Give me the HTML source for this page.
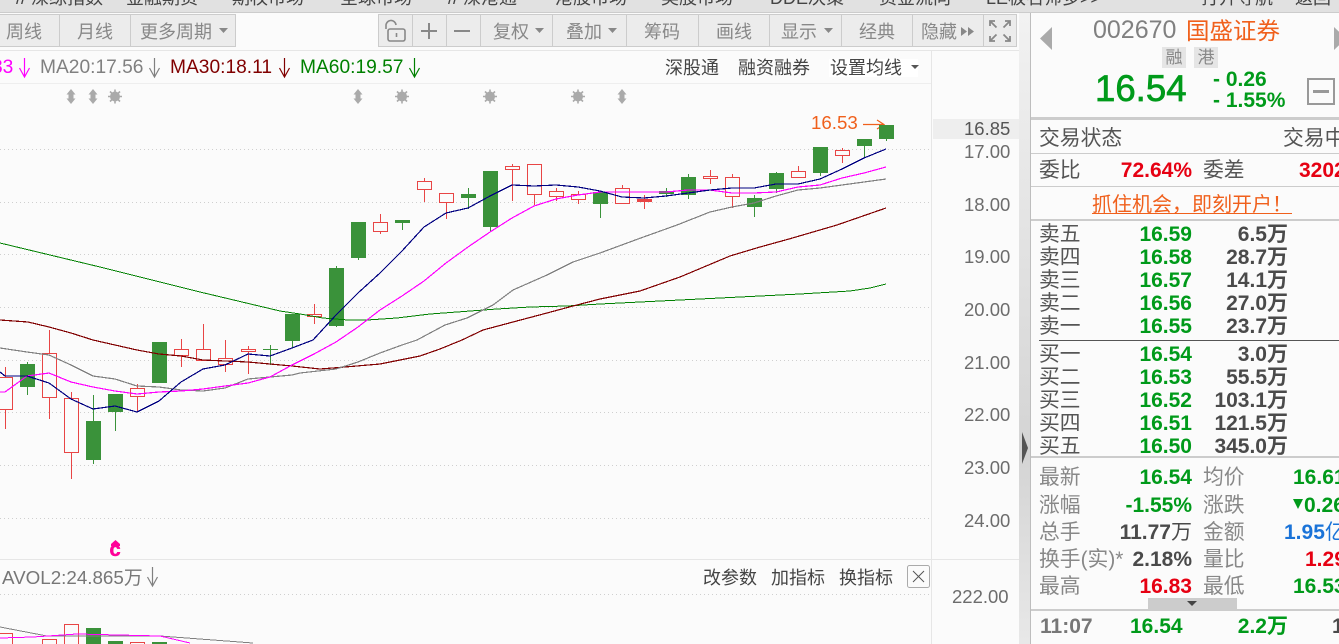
<!DOCTYPE html>
<html><head><meta charset="utf-8"><style>
html,body{margin:0;padding:0;width:1339px;height:644px;overflow:hidden;background:#fbfbfb}
body{position:relative;font-family:"Liberation Sans","Noto Sans CJK SC",sans-serif}
.t{position:absolute;white-space:nowrap;line-height:24px;height:24px}
.r{text-align:right}
.b{position:absolute;box-sizing:border-box;background:#ececec;border:1px solid #ccc;top:14px;height:33px}
.tb{font-size:18px;color:#888;top:20px}
.top{font-size:18px;color:#444;top:-14px}
.ax{font-size:18.5px;color:#6c6c6c;left:964px}
.ma{font-size:19.2px;top:56px}
.lnk{font-size:18px;color:#444}
.lb{font-size:20.8px;color:#555;left:1039px;transform:translateY(1px)}
.lg{font-size:20.8px;color:#888;transform:translateY(1px)}
.v{font-size:21px;font-weight:bold;transform:translateY(1px)}
.g{color:#009a1a}.rd{color:#e60012}.dk{color:#4a4a4a}.bl{color:#1a73d8}
.h{position:absolute;left:1031px;width:308px;background:#ccc}
</style></head><body>
<div style="position:absolute;left:0;top:0;width:1339px;height:12px;background:#e1e1e1;border-bottom:1px solid #ccc;overflow:hidden">
<span class="t top" style="left:16px">// 深综指数</span><span class="t top" style="left:126px">金融期货</span><span class="t top" style="left:232px">期权市场</span><span class="t top" style="left:340px">全球市场</span><span class="t top" style="left:448px">// 深港通</span><span class="t top" style="left:555px">港股市场</span><span class="t top" style="left:661px">美股市场</span><span class="t top" style="left:770px">DDE决策</span><span class="t top" style="left:879px">资金流向</span><span class="t top" style="left:986px">LE板名师多&gt;&gt;</span><span class="t top" style="left:1201px">打开导航</span><span class="t top" style="left:1295px">返回</span>
</div>
<div style="position:absolute;left:0;top:50px;width:1019px;height:1px;background:#e6e6e6"></div>
<div style="position:absolute;left:0;top:83px;width:932px;height:1px;background:#eee"></div>
<div style="position:absolute;left:931px;top:50px;width:1px;height:594px;background:#e6e6e6"></div>
<div style="position:absolute;left:0;top:559px;width:1019px;height:1px;background:#e6e6e6"></div>
<div style="position:absolute;left:933px;top:119px;width:86px;height:20px;background:#eee"></div>

<div class="b" style="left:-2px;width:62px"></div><div class="b" style="left:59px;width:72px"></div><div class="b" style="left:130px;width:106px"></div>
<div class="b" style="left:378px;width:35px"></div><div class="b" style="left:412px;width:35px"></div><div class="b" style="left:446px;width:35px"></div><div class="b" style="left:480px;width:73px"></div><div class="b" style="left:552px;width:75px"></div><div class="b" style="left:626px;width:73px"></div><div class="b" style="left:698px;width:72px"></div><div class="b" style="left:769px;width:73px"></div><div class="b" style="left:841px;width:72px"></div><div class="b" style="left:912px;width:72px"></div><div class="b" style="left:983px;width:34px"></div>
<span class="t tb" style="left:6px">周线</span><span class="t tb" style="left:77px">月线</span><span class="t tb" style="left:140px">更多周期</span><span class="t tb" style="left:493px">复权</span><span class="t tb" style="left:566px">叠加</span><span class="t tb" style="left:644px">筹码</span><span class="t tb" style="left:716px">画线</span><span class="t tb" style="left:781px">显示</span><span class="t tb" style="left:859px">经典</span><span class="t tb" style="left:921px">隐藏</span>

<svg width="1339" height="644" style="position:absolute;left:0;top:0" xmlns="http://www.w3.org/2000/svg">
<g fill="#888"><path d="M219 28h9l-4.500 5z M535 28h9l-4.500 5z M608 28h9l-4.500 5z M824 28h9l-4.500 5z M961 27l6 4.500-6 4.500z M968 27l6 4.500-6 4.500z"/></g>
<g fill="none" stroke="#888" stroke-width="1.600"><rect x="388" y="29" width="17" height="12" rx="2"/><path d="M386 29V26a5 5 0 0 1 10-1M396.500 33v4"/></g>
<path d="M421 31h16M429 23v16M454 31h16" stroke="#888" stroke-width="2" fill="none"/>
<g fill="none" stroke="#888" stroke-width="1.800"><path d="M990 26v-5h5M990.500 21.500l6 6M1010 26v-5h-5M1009.500 21.500l-6 6M990 36v5h5M990.500 40.500l6-6M1010 36v5h-5M1009.500 40.500l-6-6"/></g>
<rect x="829" y="59" width="89" height="18" fill="#fff"/>
<path d="M911 65h8l-4 4z" fill="#555"/>

<g stroke="#cfcfcf" stroke-width="1" stroke-dasharray="1 3" shape-rendering="crispEdges">
<path d="M0 149.500H932M0 202.500H932M0 254.500H932M0 307.500H932M0 360.500H932M0 412.500H932M0 465.500H932M0 518.500H932M0 594.500H932"/></g>

<g fill="#aaa" stroke="none">
<path d="M71 89l4.500 5.500h-2v4h2l-4.500 5.500-4.500-5.500h2v-4h-2z M93 89l4.500 5.500h-2v4h2l-4.500 5.500-4.500-5.500h2v-4h-2z M358 89l4.500 5.500h-2v4h2l-4.500 5.500-4.500-5.500h2v-4h-2z M622 89l4.500 5.500h-2v4h2l-4.500 5.500-4.500-5.500h2v-4h-2z"/>
<circle cx="115" cy="96.500" r="5"/><circle cx="402" cy="96.500" r="5"/><circle cx="490" cy="96.500" r="5"/><circle cx="578" cy="96.500" r="5"/>
</g>
<g stroke="#aaa" stroke-width="1.600"><path d="M108 96.500h14M115 89.500v14M110 91.500l10 10M120 91.500l-10 10M395 96.500h14M402 89.500v14M397 91.500l10 10M407 91.500l-10 10M483 96.500h14M490 89.500v14M485 91.500l10 10M495 91.500l-10 10M571 96.500h14M578 89.500v14M573 91.500l10 10M583 91.500l-10 10"/></g>

<g fill="none" stroke-width="1.200">
<path d="M24.500 58V77M19.500 68l5 9 5-9" stroke="#ff00ff"/>
<path d="M154.500 58V77M149.500 68l5 9 5-9" stroke="#808080"/>
<path d="M284.500 58V77M279.500 68l5 9 5-9" stroke="#800000"/>
<path d="M414.500 58V77M409.500 68l5 9 5-9" stroke="#008000"/>
<path d="M152.500 567V586M147.500 577l5 9 5-9" stroke="#808080"/>
<path d="M863 124.500H884M877 120l7 4.500-7 4.500" stroke="#f0601c"/>
</g>

<g shape-rendering="crispEdges">
<path stroke="#e84545" fill="none" d="M5.500 367V429M49.500 330V419M71.500 392V479M137.500 384V412M181.500 339V367M203.500 324V361M225.500 340V372M248.500 346V374M314.500 304V324M380.500 214V234M424.500 178V202M446.500 193V219M512.500 164V201M534.500 164V205M556.500 188V201M578.500 191V204M622.500 185V203M644.500 195V209M710.500 170V184M732.500 174V208M798.500 166V178M842.500 148V163"/>
<g fill="#fbfbfb" stroke="#e84545">
<rect x="-1.500" y="377.500" width="14" height="32"/><rect x="42.500" y="353.500" width="14" height="44"/><rect x="64.500" y="398.500" width="14" height="54"/><rect x="130.500" y="388.500" width="14" height="8"/><rect x="174.500" y="349.500" width="14" height="6"/><rect x="196.500" y="349.500" width="14" height="11"/><rect x="218.500" y="358.500" width="14" height="6"/><rect x="241.500" y="349.500" width="14" height="2"/><rect x="307.500" y="314.500" width="14" height="2"/><rect x="373.500" y="222.500" width="14" height="9"/><rect x="417.500" y="181.500" width="14" height="8"/><rect x="439.500" y="193.500" width="14" height="9"/><rect x="505.500" y="166.500" width="14" height="3"/><rect x="527.500" y="164.500" width="14" height="30"/><rect x="549.500" y="191.500" width="14" height="5"/><rect x="571.500" y="194.500" width="14" height="5"/><rect x="615.500" y="188.500" width="14" height="15"/><rect x="637.500" y="199.500" width="14" height="2" fill="#e84545"/><rect x="703.500" y="176.500" width="14" height="2"/><rect x="725.500" y="177.500" width="14" height="19"/><rect x="791.500" y="171.500" width="14" height="6"/><rect x="835.500" y="150.500" width="14" height="5"/>
</g>
<path stroke="#3a923a" fill="none" d="M27.500 362V395M93.500 395V464M115.500 394V431M159.500 342V383M270.500 345V365M292.500 314V348M336.500 266V327M358.500 222V260M402.500 220V230M468.500 188V209M490.500 171V232M600.500 192V218M666.500 188V197M688.500 174V199M754.500 195V217M776.500 172V193M820.500 147V176M864.500 139V157M886.500 125V141"/>
<g fill="#3a923a">
<rect x="20" y="364" width="15" height="23"/><rect x="86" y="421" width="15" height="39"/><rect x="108" y="394" width="15" height="18"/><rect x="152" y="342" width="15" height="41"/><rect x="263" y="349" width="15" height="1"/><rect x="285" y="314" width="15" height="27"/><rect x="329" y="268" width="15" height="58"/><rect x="351" y="222" width="15" height="36"/><rect x="395" y="220" width="15" height="3"/><rect x="461" y="194" width="15" height="4"/><rect x="483" y="171" width="15" height="56"/><rect x="593" y="192" width="15" height="12"/><rect x="659" y="191" width="15" height="3"/><rect x="681" y="177" width="15" height="18"/><rect x="747" y="198" width="15" height="9"/><rect x="769" y="173" width="15" height="16"/><rect x="813" y="147" width="15" height="26"/><rect x="857" y="139" width="15" height="7"/><rect x="879" y="125" width="15" height="14"/>
</g>
<!-- volume -->
<g fill="#fbfbfb" stroke="#e84545"><rect x="-1.500" y="633.500" width="14" height="20"/><rect x="42.500" y="639.500" width="14" height="20"/><rect x="64.500" y="624.500" width="14" height="30"/><rect x="130.500" y="642.500" width="14" height="20"/></g>
<g fill="#3a923a"><rect x="86" y="628" width="15" height="20"/><rect x="108" y="641" width="15" height="10"/><rect x="152" y="642" width="15" height="10"/></g>
<g fill="none" stroke-width="1">
<polyline stroke="#808080" points="0,627 47,636 160,636 253,643"/>
<polyline stroke="#ff00ff" points="0,638 33,637 77,634 160,636 190,643"/>
<polyline stroke="#008000" points="0,243 100,267 200,292 280,311 300,314 323,318 348,320 367,320 397,318 430,314 457,312 497,309 530,307 567,306 600,304 700,299 800,294 850,291 870,288 886,284"/>
<polyline stroke="#800000" stroke-width="1.200" points="0,320 28,322 49,327 71,333 93,340 115,345 137,350 159,354 181,356 203,360 225,361 248,362 270,364 292,366 320,369 345,367 380,364 420,356 440,349 462,340 483,330 513,322 547,313 573,306 600,299 640,291 680,277 730,256 760,247 789,239 837,225 886,208"/>
<polyline stroke="#808080" stroke-width="1.200" points="0,348 27,352 49,355 71,365 93,376 115,379 137,386 159,387 181,390 203,391 225,388 248,379 270,377 292,375 300,373 336,369 358,362 380,353 402,345 417,340 445,325 467,318 493,305 513,290 547,275 573,262 600,253 638,239 677,225 710,212 732,207 754,203 776,196 798,190 820,188 842,185 864,182 886,179"/>
<polyline stroke="#ff00ff" stroke-width="1.200" points="0,392 5,392 27,376 49,373 71,382 93,387 115,391 137,394 159,392 181,391 203,389 225,386 248,383 270,377 292,365 314,354 336,342 358,327 380,310 402,296 424,281 446,263 468,247 490,232 512,218 534,206 556,199 578,195 600,192 622,192 644,192 666,192 688,190 710,190 732,193 754,193 776,192 798,187 820,185 842,178 864,173 886,167"/>
<polyline stroke="#000080" stroke-width="1.200" points="0,372 5,376 27,376 49,383 71,399 93,409 115,406 137,412 159,401 181,382 203,369 225,365 248,354 270,356 292,348 313,340 336,315 358,293 380,273 402,251 424,227 446,213 468,208 490,196 512,185 534,186 556,185 578,187 600,191 622,197 644,198 666,196 688,193 710,190 732,188 754,188 776,184 798,184 820,179 842,169 864,158 886,149"/>
</g>
</g>
<path d="M115.500 540l4.500 4v2h-9v-2z" fill="#ff0099"/>
<text x="109.500" y="556" font-family="Liberation Sans" font-weight="bold" font-size="20" fill="#ff0099" stroke="#ff0099" stroke-width=".5">c</text>
<rect x="907.500" y="565.500" width="22" height="22" rx="2" fill="#fbfbfb" stroke="#aaa"/>
<path d="M913 571l11 11M924 571l-11 11" stroke="#555" stroke-width="1" fill="none"/>
</svg>

<span class="t ma" style="left:-8px;color:#ff00ff">33</span>
<span class="t ma" style="left:40px;color:#808080">MA20:17.56</span>
<span class="t ma" style="left:170px;color:#800000">MA30:18.11</span>
<span class="t ma" style="left:300px;color:#008000">MA60:19.57</span>
<span class="t lnk" style="left:665px;top:56px">深股通</span>
<span class="t lnk" style="left:738px;top:56px">融资融券</span>
<span class="t lnk" style="left:830px;top:56px">设置均线</span>
<span class="t" style="left:811px;top:111px;font-size:18.7px;color:#f0601c">16.53</span>
<span class="t" style="left:2px;top:566px;font-size:18.8px;color:#777">AVOL2:24.865万</span>
<span class="t lnk" style="left:703px;top:566px">改参数</span>
<span class="t lnk" style="left:771px;top:566px">加指标</span>
<span class="t lnk" style="left:839px;top:566px">换指标</span>

<span class="t ax" style="top:117px;color:#555">16.85</span>
<span class="t ax" style="top:140px">17.00</span><span class="t ax" style="top:193px">18.00</span><span class="t ax" style="top:245px">19.00</span><span class="t ax" style="top:298px">20.00</span><span class="t ax" style="top:351px">21.00</span><span class="t ax" style="top:403px">22.00</span><span class="t ax" style="top:456px">23.00</span><span class="t ax" style="top:509px">24.00</span><span class="t ax" style="top:585px;left:952px">222.00</span>

<!-- splitter -->
<div style="position:absolute;left:1019px;top:13px;width:11px;height:631px;background:linear-gradient(#f2f2f2,#d4d4d4 70%,#e8e8e8)"></div>
<div style="position:absolute;left:1030px;top:13px;width:1px;height:631px;background:#bdbdbd"></div>
<svg width="10" height="40" style="position:absolute;left:1020px;top:429px"><path d="M2 3l6 16-6 16z" fill="#555"/></svg>

<!-- right panel -->
<svg width="308" height="120" style="position:absolute;left:1031px;top:13px">
<path d="M21 14v23L9 25.500z" fill="#aaa"/><path d="M303 14v23l12-11.500z" fill="#aaa"/>
<rect x="277" y="66" width="26" height="25" fill="none" stroke="#999" stroke-width="2"/><rect x="282" y="77" width="16" height="3" fill="#999"/>
</svg>
<span class="t" style="left:1093px;top:18px;font-size:25px;color:#808080">002670</span>
<span class="t" style="left:1186px;top:19px;font-size:23.5px;color:#f0601c">国盛证券</span>
<span class="t" style="left:1162px;top:47px;width:24px;height:21px;line-height:21px;background:#e5e5e5;text-align:center;font-size:17px;color:#888">融</span>
<span class="t" style="left:1194px;top:47px;width:24px;height:21px;line-height:21px;background:#e5e5e5;text-align:center;font-size:17px;color:#888">港</span>
<span class="t g" style="left:1095px;top:76px;font-size:36.6px;line-height:26px;height:26px;-webkit-text-stroke:.7px #009a1a">16.54</span>
<span class="t v g" style="left:1213px;top:67px;">- 0.26</span>
<span class="t v g" style="left:1213px;top:88px;">- 1.55%</span>

<div class="h" style="top:117px;height:3px"></div>
<span class="t lb" style="top:126px;left:1039px">交易状态</span><span class="t lb" style="top:126px;left:1283px">交易中</span>
<div class="h" style="top:153px;height:1px"></div>
<span class="t lb" style="top:158px">委比</span><span class="t v rd r" style="top:158px;left:1092px;width:100px">72.64%</span>
<span class="t lb" style="top:158px;left:1203px">委差</span><span class="t v rd" style="top:158px;left:1299px">3202</span>
<div class="h" style="top:186px;height:1px"></div>
<span class="t" style="left:1092px;top:193px;font-size:20px;color:#f0601c">抓住机会，即刻开户！</span>
<div style="position:absolute;left:1092px;top:213px;width:200px;height:1px;background:#f0601c"></div>
<div class="h" style="top:219px;height:2px"></div>

<span class="t lb" style="top:222px">卖五</span><span class="t v g r" style="top:222px;left:1092px;width:100px">16.59</span><span class="t v dk r" style="top:222px;left:1188px;width:100px">6.5万</span>
<span class="t lb" style="top:245px">卖四</span><span class="t v g r" style="top:245px;left:1092px;width:100px">16.58</span><span class="t v dk r" style="top:245px;left:1188px;width:100px">28.7万</span>
<span class="t lb" style="top:268px">卖三</span><span class="t v g r" style="top:268px;left:1092px;width:100px">16.57</span><span class="t v dk r" style="top:268px;left:1188px;width:100px">14.1万</span>
<span class="t lb" style="top:291px">卖二</span><span class="t v g r" style="top:291px;left:1092px;width:100px">16.56</span><span class="t v dk r" style="top:291px;left:1188px;width:100px">27.0万</span>
<span class="t lb" style="top:314px">卖一</span><span class="t v g r" style="top:314px;left:1092px;width:100px">16.55</span><span class="t v dk r" style="top:314px;left:1188px;width:100px">23.7万</span>
<div class="h" style="top:340px;height:1px;left:1039px;width:300px;background:#555"></div>
<span class="t lb" style="top:342px">买一</span><span class="t v g r" style="top:342px;left:1092px;width:100px">16.54</span><span class="t v dk r" style="top:342px;left:1188px;width:100px">3.0万</span>
<span class="t lb" style="top:365px">买二</span><span class="t v g r" style="top:365px;left:1092px;width:100px">16.53</span><span class="t v dk r" style="top:365px;left:1188px;width:100px">55.5万</span>
<span class="t lb" style="top:388px">买三</span><span class="t v g r" style="top:388px;left:1092px;width:100px">16.52</span><span class="t v dk r" style="top:388px;left:1188px;width:100px">103.1万</span>
<span class="t lb" style="top:411px">买四</span><span class="t v g r" style="top:411px;left:1092px;width:100px">16.51</span><span class="t v dk r" style="top:411px;left:1188px;width:100px">121.5万</span>
<span class="t lb" style="top:434px">买五</span><span class="t v g r" style="top:434px;left:1092px;width:100px">16.50</span><span class="t v dk r" style="top:434px;left:1188px;width:100px">345.0万</span>
<div class="h" style="top:456px;height:2px"></div>

<span class="t lg" style="left:1039px;top:465px">最新</span><span class="t v g r" style="top:465px;left:1092px;width:100px">16.54</span><span class="t lg" style="left:1203px;top:465px">均价</span><span class="t v g" style="left:1293px;top:465px">16.61</span>
<span class="t lg" style="left:1039px;top:493px">涨幅</span><span class="t v g r" style="top:493px;left:1092px;width:100px">-1.55%</span><span class="t lg" style="left:1203px;top:493px">涨跌</span><span class="t v g" style="left:1304px;top:493px">0.26</span>
<svg width="12" height="12" style="position:absolute;left:1292px;top:498px"><path d="M1 1h10l-5 10z" fill="#009a1a"/></svg>
<span class="t lg" style="left:1039px;top:520px">总手</span><span class="t v dk r" style="top:520px;left:1092px;width:100px">11.77<span style="font-weight:normal">万</span></span><span class="t lg" style="left:1203px;top:520px">金额</span><span class="t v bl" style="left:1284px;top:520px">1.95<span style="font-weight:normal">亿</span></span>
<span class="t lg" style="left:1039px;top:547px">换手(实)*</span><span class="t v dk r" style="top:547px;left:1092px;width:100px">2.18%</span><span class="t lg" style="left:1203px;top:547px">量比</span><span class="t v rd" style="left:1305px;top:547px">1.29</span>
<span class="t lg" style="left:1039px;top:574px">最高</span><span class="t v rd r" style="top:574px;left:1092px;width:100px">16.83</span><span class="t lg" style="left:1203px;top:574px">最低</span><span class="t v g" style="left:1293px;top:574px">16.53</span>

<div style="position:absolute;left:1148px;top:598px;width:89px;height:11px;background:#ccc"></div>
<svg width="12" height="8" style="position:absolute;left:1186px;top:600px"><path d="M1 1h10l-5 5z" fill="#444"/></svg>
<div class="h" style="top:609px;height:2px"></div>
<span class="t v" style="left:1040px;top:614px;color:#777">11:07</span>
<span class="t v g" style="left:1130px;top:614px">16.54</span>
<span class="t v g r" style="left:1188px;top:614px;width:100px">2.2万</span>
<span class="t v dk" style="left:1332px;top:614px">1</span>
</body></html>
